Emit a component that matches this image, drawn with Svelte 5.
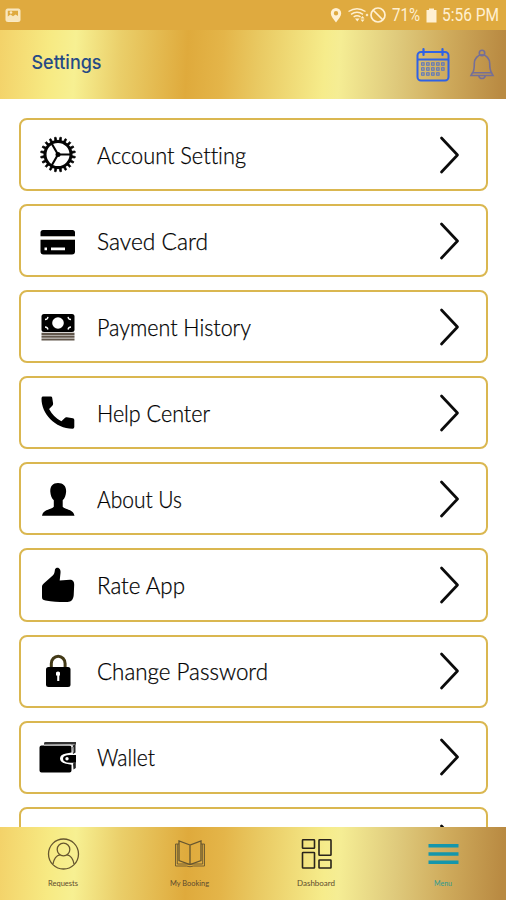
<script lang="ts">
  // width is the drawn length of the label in px
  const items = [
    { icon: 'gear', label: 'Account Setting', width: 149 },
    { icon: 'card', label: 'Saved Card', width: 111 },
    { icon: 'cash', label: 'Payment History', width: 154 },
    { icon: 'phone', label: 'Help Center', width: 113 },
    { icon: 'person', label: 'About Us', width: 85 },
    { icon: 'thumb', label: 'Rate App', width: 88 },
    { icon: 'lock', label: 'Change Password', width: 171 },
    { icon: 'wallet', label: 'Wallet', width: 58 },
    { icon: '', label: '', width: 0 },
  ];

  const tabs = [
    { icon: 'requests', label: 'Requests', width: 30 },
    { icon: 'booking', label: 'My Booking', width: 39 },
    { icon: 'dashboard', label: 'Dashboard', width: 38 },
    { icon: 'menu', label: 'Menu', width: 18 },
  ];

  const teeth = Array.from({ length: 20 }, (_, i) => i * 18);
  const dots = [0, 1, 2, 3, 4];
</script>

<div class="screen">
  <div class="status">
    <svg class="photo" width="16" height="15" viewBox="0 0 16 15">
      <rect x="1" y="1" width="14" height="12.500" rx="1.500" fill="#f8e6bd" stroke="#fae9c4" />
      <path d="M2.800 8.500V2.800h10.200v5.200L10.500 6.500 8 8.300 5.500 6.500Z" fill="#dfaa3f" />
      <circle cx="6" cy="4.500" r="1.300" fill="#fae9c4" />
    </svg>
    <svg width="171" height="22" viewBox="0 0 171 22" fill="#fff0d2">
      <path fill-rule="evenodd" d="M6 4a5.200 5.200 0 0 0-5.200 5.200C.8 12 3.500 15 6 18.500 8.500 15 11.200 12 11.200 9.200A5.200 5.200 0 0 0 6 4Zm0 3a2.200 2.200 0 1 1 0 4.400A2.200 2.200 0 0 1 6 7Z" />
      <g fill="none" stroke="#fff0d2" stroke-width="1.400">
        <path d="M18.500 7.500q8.500-5.500 17 0M21 10.300q6-4 12 0M23.600 13q3.400-2.500 7 0" />
        <circle cx="48" cy="11" r="7" stroke-width="1.700" />
        <path d="M43 6l10 10" stroke-width="1.700" />
      </g>
      <path d="M25 14.500h4.500l-2.200 3ZM30.500 14.500l2-2.500 2 2.500ZM30.500 15.500h4l-2 2.500ZM35.500 11l1.500-1.500L38.500 11 37 12.500Z" />
      <text class="stat" x="62" y="17" textLength="28" lengthAdjust="spacingAndGlyphs">71%</text>
      <path d="M99 4.500h5V6h2.500v12.500h-10V6H99Z" />
      <text class="stat" x="112" y="17" textLength="57" lengthAdjust="spacingAndGlyphs">5:56 PM</text>
    </svg>
  </div>

  <header>
    <h1>
      <svg width="74" height="28" viewBox="0 0 74 28">
        <text x="0.500" y="19" textLength="70" lengthAdjust="spacingAndGlyphs">Settings</text>
      </svg>
    </h1>
    <svg class="calendar" width="34" height="34" viewBox="0 0 34 34" fill="none" stroke="#2f62e5">
      <rect x="1.500" y="4" width="31" height="28.500" rx="3.500" stroke-width="2" />
      <path d="M1.500 11.500h31" stroke-width="2" />
      <path d="M7.500 1v6M26.500 1v6" stroke-width="2.200" stroke-linecap="round" />
      {#each [16, 21, 26] as y}
        {#each dots as d}
          {#if !(y === 26 && d === 4)}
            <rect x={5.700 + d * 5} y={y - 1.200} width="2.400" height="2.400" stroke-width="1" stroke="#4d6fca" />
          {/if}
        {/each}
      {/each}
    </svg>
    <svg class="bell" width="24" height="32" viewBox="0 0 24 32" fill="none" stroke="#756f97" stroke-width="1.600">
      <path d="M2.500 24C4.500 21 4.300 18 4.300 14.500a7.700 8.700 0 0 1 15.400 0c0 3.500 0 6.500 2 9.500" />
      <path d="M1 26.500 2.500 23.700h19L23 26.500ZM8.800 27a3.300 3.300 0 0 0 6.400 0" />
      <circle cx="12" cy="4" r="2.700" />
    </svg>
  </header>

  <main>
    {#each items as item}
      <div class="item">
        <svg class="icon" width="38" height="38" viewBox="0 0 38 38">
          {#if item.icon === 'gear'}
            <circle cx="19" cy="18.500" r="13" fill="none" stroke="#050505" stroke-width="3" />
            {#each teeth as a}
              <path d="M17.900 5 18.200 1.100h1.600l.3 3.900Z" stroke="#050505" stroke-width=".7" transform="rotate({a + 9} 19 18.500)" />
            {/each}
            <path d="M19 18.500h13M19 18.500l-6.500-11.300M19 18.500l-6.500 11.300" stroke="#050505" stroke-width="2.100" />
            <circle cx="19" cy="18.500" r="2.500" />
          {:else if item.icon === 'card'}
            <path d="M1.500 14V10.500Q1.500 8 4 8h29.500q2.500 0 2.500 2.500V14Z" />
            <path fill-rule="evenodd" d="M1.500 18H36v11.500q0 3-3 3H4.500q-3 0-3-3ZM5.500 25.500v2.800h2.500v-2.800ZM12 25.500v2.800h14v-2.800Z" />
            <path d="M1.500 14.500H36M1.500 17.500H36" stroke="#aaa69a" stroke-width=".8" />
          {:else if item.icon === 'cash'}
            <rect x="2.500" y="6" width="33" height="18" rx="2.500" />
            <circle cx="19" cy="15" r="5.800" fill="#fff" />
            <g fill="none" stroke="#fff" stroke-width="1.300">
              <path d="M6 11.500q2.500 0 3-2.700M32 11.500q-2.500 0-3-2.700M6 19q2.500 0 3 2.500M32 19q-2.500 0-3 2.500" />
            </g>
            <path d="M2.500 25.800h33M2.500 28.700h33M2.500 31.500h33" stroke="#61564b" stroke-width="2.200" />
          {:else if item.icon === 'phone'}
            <path d="M3.500 2.500h8.200q1.400 0 1.500 1.300l.9 5.700q.2 1.200-.6 2l-3.400 3.400q4.300 8.200 12.300 12.300l3.400-3.300q.8-.8 2-.6l6 1q1.500.2 1.500 1.600v7.200q0 1.700-1.700 1.700C16 34.300 2.500 20 2.500 4.500q0-1.500 1-2Z" />
          {:else if item.icon === 'person'}
            <path d="M19 3c-5.500 0-8 3.500-7.700 8.800.2 3.500 1.500 6.700 3.500 8.500v6.500c-2 3-10.600 2-11.800 9H35.500c-1.200-7-9.800-6-11.800-9v-6.500c2-1.800 3.200-5 3.400-8.500C27.400 6.500 24.500 3 19 3Z" />
          {:else if item.icon === 'thumb'}
            <path d="M17.200 2c2.700-1.200 4.800 1.500 4.300 5L20.700 14.500l10-.7c3.300 0 4.600 2 4.500 5l-.5 10.500c-.4 4.300-2.500 6.700-6.200 6.700-7.500.2-14.500-.5-22-1.600-2.500-.4-3.500-1.200-3.500-3.500V21c0-1.500.5-2.500 2-3.700l9-8.100c1.200-1.200 1.400-2.400 1.800-4.500.1-1.200.5-2.100 1.400-2.700Z" />
          {:else if item.icon === 'lock'}
            <path d="M12.300 16V11.500a6.900 7.200 0 0 1 13.800 0v4.500" fill="none" stroke="#433a17" stroke-width="3" />
            <rect x="7" y="15" width="24.500" height="20" rx="2.500" />
            <path d="M18.200 29v-5.500h-1.200v-3q2-2 4 0v3h-.7V29Z" fill="#fff" />
          {:else if item.icon === 'wallet'}
            <path d="M5 7V5.300Q5 4 6.500 4H37V6.500" fill="#333" />
            <path d="M.5 9.500q0-2 2-2H30.500q2 0 2 2v5l-5.500 1q-6 1-6 5t6 5.200l5.500 1v5.800q0 2-2 2H2.500q-2 0-2-2Z" />
            <path d="M33 8l3.500-2v8.500L34 16ZM34 25.500l2.800-1.500v6L34.500 31.500Z" fill="#222" />
            <path fill-rule="evenodd" d="M37 17h-6q-7 0-7 3.700t7 4h5q1 0 1-1Zm-9 2a1.700 1.700 0 1 1 0 3.400 1.700 1.700 0 0 1 0-3.400Z" />
            <path d="M5 7h26.500q2 .2 2.500 2.500v5" fill="none" stroke="#ddd" stroke-width="1" />
          {/if}
        </svg>
        <div class="label">
          {#if item.label}
            <svg width="180" height="34" viewBox="0 0 180 34">
              <text x="0" y="25.500" textLength={item.width} lengthAdjust="spacingAndGlyphs">{item.label}</text>
            </svg>
          {/if}
        </div>
        <svg class="chevron" width="22" height="38" viewBox="0 0 22 38">
          <path d="M2.500 2 18.500 19 2.500 36" fill="none" stroke="#0b0b0b" stroke-width="2.700" stroke-linecap="round" stroke-linejoin="round" />
        </svg>
      </div>
    {/each}
  </main>

  <nav>
    {#each tabs as tab}
      <div class="tab" class:active={tab.icon === 'menu'}>
        <svg width="32" height="32" viewBox="0 0 32 32" fill="none" stroke="#66562f" stroke-width="1.300">
          {#if tab.icon === 'requests'}
            <circle cx="16.500" cy="16" r="15" />
            <circle cx="16.500" cy="11.500" r="6.300" />
            <path d="M6 26Q7.500 17.700 13 16.800M27 26Q25.500 17.700 20 16.800" />
          {:else if tab.icon === 'booking'}
            <path d="M16 7 5 3v19.500l11 4 11-4V3ZM16 7v19.500" />
            <path d="M5 6H1.500v22h11q3.500 1.500 7 0h11V6H27M3.300 6v20H14q2 1 4 0h10.700V6" stroke-width=".9" />
          {:else if tab.icon === 'dashboard'}
            <g stroke="#29231a" stroke-width="1.600">
              <rect x="2.500" y="1.800" width="12" height="8.500" rx=".6" />
              <rect x="19" y="1.800" width="12" height="15.500" rx=".6" />
              <rect x="2.500" y="14.500" width="12" height="15.500" rx=".6" />
              <rect x="19" y="22" width="12" height="8" rx=".6" />
            </g>
          {:else}
            <path d="M1.500 7.800h30M1.500 16h30M1.500 24.200h30" stroke="#1596ab" stroke-width="3.400" />
          {/if}
        </svg>
        <svg class="tab-label" width={tab.width} height="12" viewBox="0 0 {tab.width} 12">
          <text x="0" y="9" textLength={tab.width} lengthAdjust="spacingAndGlyphs">{tab.label}</text>
        </svg>
      </div>
    {/each}
  </nav>
</div>

<style>
:global(body) {
  margin: 0;
  background: #fff;
}
.screen {
  --gold: linear-gradient(93deg, #f3d269 0%, #f7ea83 10%, #f7f092 15%, #eace69 24%, #dfaa3c 37%, #e4b549 44%, #e9c962 51%, #f6ec8b 64%, #f5ed94 67%, #dfca7c 78%, #cfab5c 88%, #b98a42 99%);
  width: 506px;
  height: 900px;
  display: flex;
  flex-direction: column;
  overflow: hidden;
  background: #fff;
  font-family: Lato, "Open Sans", sans-serif;
  font-variant-ligatures: none;
}
svg {
  display: block;
  flex: none;
  overflow: visible;
}
.status {
  height: 30px;
  flex: none;
  display: flex;
  align-items: center;
  justify-content: space-between;
  padding: 0 5px;
  background: #dfaa3f;
}
.stat {
  font: 18px Roboto, sans-serif;
}
header {
  height: 68.5px;
  box-sizing: border-box;
  flex: none;
  display: flex;
  align-items: center;
  padding: 2px 12px 0 31px;
  background: var(--gold);
}
h1 {
  flex: 1;
  margin: 0;
  font: 500 18.5px Inter, sans-serif;
}
h1 text {
  fill: #264b85;
}
h1 svg {
  margin-top: -2px;
}
.bell {
  margin-left: 20px;
}
main {
  flex: 1;
  min-height: 0;
  overflow: hidden;
  display: flex;
  flex-direction: column;
  gap: 13px;
  padding: 19.5px 18px 0 19px;
}
.item {
  height: 73.1px;
  flex: none;
  box-sizing: border-box;
  display: flex;
  align-items: center;
  padding: 0 25px 0 18px;
  border: 2.5px solid #dab750;
  border-radius: 8px;
}
.label {
  flex: 1;
  padding-left: 20px;
}
.label text {
  font-size: 23px;
  font-weight: 300;
  fill: #000;
  stroke: #000;
  stroke-width: 0.25px;
}
nav {
  height: 73px;
  flex: none;
  display: flex;
  background: var(--gold);
}
.tab {
  flex: 1;
  display: flex;
  flex-direction: column;
  align-items: center;
  padding-top: 11px;
}
.tab-label {
  margin-top: 7px;
}
.tab-label text {
  font-size: 8px;
  fill: #5c4a2d;
}
.active text {
  fill: #2e9a90;
}
</style>
